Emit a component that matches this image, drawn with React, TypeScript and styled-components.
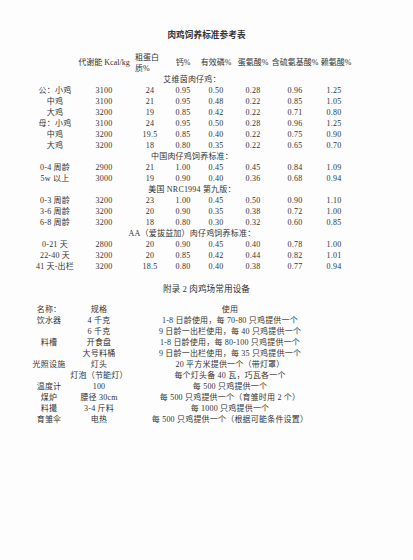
import React from "react";
import styled, { createGlobalStyle } from "styled-components";

const GlobalStyle = createGlobalStyle`
  html, body {
    margin: 0;
    padding: 0;
    background: #fdfdfd;
  }

  body {
    font-family: "Liberation Serif", "Noto Sans CJK SC", serif;
    font-size: 8px;
    color: #333;
  }
`;

const Page = styled.div`
  width: 413px;
  height: 560px;
  padding-top: 30px;
  box-sizing: border-box;
`;

const Title = styled.h1<{ $gap?: number; $plain?: boolean }>`
  margin: ${(props) => props.$gap ?? 0}px 0 0;
  font-size: 8.6px;
  font-weight: ${(props) => (props.$plain ? "normal" : "bold")};
  line-height: 11px;
  text-align: center;
  letter-spacing: 0.1px;
`;

const FeedGrid = styled.div`
  display: grid;
  grid-template-columns: 50px 48px 44px 22px 44px 30px 54px 24px;
  grid-auto-rows: 11px;
  margin: 11px 0 0 30px;
  width: 316px;
`;

const Cell = styled.div`
  display: flex;
  justify-content: center;
  align-items: center;
  white-space: nowrap;
  line-height: 11px;
  letter-spacing: 0.2px;
`;

const HeadCell = styled(Cell)<{ $shift?: number }>`
  grid-row: span 2;
  margin-bottom: 1px;
  letter-spacing: 0;
  padding-left: ${(props) => props.$shift ?? 0}px;
`;

const Wrapped = styled.span`
  width: 25px;
  white-space: normal;
  text-align: left;
  margin-right: 5px;
`;

const Section = styled(Cell)`
  grid-column: 1 / -1;
  padding-left: 8px;
`;

const EquipGrid = styled.div`
  display: grid;
  grid-template-columns: 50px 50px 212px;
  grid-auto-rows: 11px;
  margin: 9px 0 0 24px;
`;

type FeedRow = [string, string, string, string, string, string, string, string];

const groups: { title?: string; rows: FeedRow[] }[] = [
  {
    title: "艾维茵肉仔鸡：",
    rows: [
      ["公：小鸡", "3100", "24", "0.95", "0.50", "0.28", "0.96", "1.25"],
      ["中鸡", "3100", "21", "0.95", "0.48", "0.22", "0.85", "1.05"],
      ["大鸡", "3200", "19", "0.85", "0.42", "0.22", "0.71", "0.80"],
      ["母：小鸡", "3100", "24", "0.95", "0.50", "0.28", "0.96", "1.25"],
      ["中鸡", "3200", "19.5", "0.85", "0.40", "0.22", "0.75", "0.90"],
      ["大鸡", "3200", "18", "0.80", "0.35", "0.22", "0.65", "0.70"],
    ],
  },
  {
    title: "中国肉仔鸡饲养标准：",
    rows: [
      ["0-4 周龄", "2900", "21", "1.00", "0.45", "0.45", "0.84", "1.09"],
      ["5w 以上", "3000", "19", "0.90", "0.40", "0.36", "0.68", "0.94"],
    ],
  },
  {
    title: "美国 NRC1994 第九版：",
    rows: [
      ["0-3 周龄", "3200", "23", "1.00", "0.45", "0.50", "0.90", "1.10"],
      ["3-6 周龄", "3200", "20", "0.90", "0.35", "0.38", "0.72", "1.00"],
      ["6-8 周龄", "3200", "18", "0.80", "0.30", "0.32", "0.60", "0.85"],
    ],
  },
  {
    title: "AA（爱拔益加）肉仔鸡饲养标准：",
    rows: [
      ["0-21 天", "2800", "20", "0.90", "0.45", "0.40", "0.78", "1.00"],
      ["22-40 天", "3200", "20", "0.85", "0.42", "0.44", "0.82", "1.01"],
      ["41 天-出栏", "3200", "18.5", "0.80", "0.40", "0.38", "0.77", "0.94"],
    ],
  },
];

const equipment: [string, string, string][] = [
  ["名称：", "规格", "使用"],
  ["饮水器", "4 千克", "1-8 日龄使用，每 70-80 只鸡提供一个"],
  ["", "6 千克", "9 日龄一出栏使用，每 40 只鸡提供一个"],
  ["料槽", "开食盘", "1-8 日龄使用，每 80-100 只鸡提供一个"],
  ["", "大号料桶", "9 日龄一出栏使用，每 35 只鸡提供一个"],
  ["光照设施", "灯头", "20 平方米提供一个（带灯罩）"],
  ["", "灯泡（节能灯）", "每个灯头备 40 瓦，巧瓦各一个"],
  ["温度计", "100", "每 500 只鸡提供一个"],
  ["煤炉", "腰径 30cm", "每 500 只鸡提供一个（育雏时用 2 个）"],
  ["料撮", "3-4 斤料", "每 1000 只鸡提供一个"],
  ["育雏伞", "电热", "每 500 只鸡提供一个（根据可能条件设置）"],
];

const App = () => {
  return (
    <Page>
      <GlobalStyle />
      <Title>肉鸡饲养标准参考表</Title>

      <FeedGrid>
        <HeadCell />
        <HeadCell>代谢能 Kcal/kg</HeadCell>
        <HeadCell>
          <Wrapped>粗蛋白质%</Wrapped>
        </HeadCell>
        <HeadCell>钙%</HeadCell>
        <HeadCell>有效磷%</HeadCell>
        <HeadCell>蛋氨酸%</HeadCell>
        <HeadCell>含硫氨基酸%</HeadCell>
        <HeadCell $shift={4}>赖氨酸%</HeadCell>

        {groups.map((group) => (
          <React.Fragment key={group.title}>
            <Section>{group.title}</Section>
            {group.rows.map((row, i) =>
              row.map((value, j) => <Cell key={`${i}-${j}`}>{value}</Cell>)
            )}
          </React.Fragment>
        ))}
      </FeedGrid>

      <Title $gap={12} $plain>
        附录 2 肉鸡场常用设备
      </Title>

      <EquipGrid>
        {equipment.map((row, i) =>
          row.map((value, j) => <Cell key={`${i}-${j}`}>{value}</Cell>)
        )}
      </EquipGrid>
    </Page>
  );
};

export default App;
